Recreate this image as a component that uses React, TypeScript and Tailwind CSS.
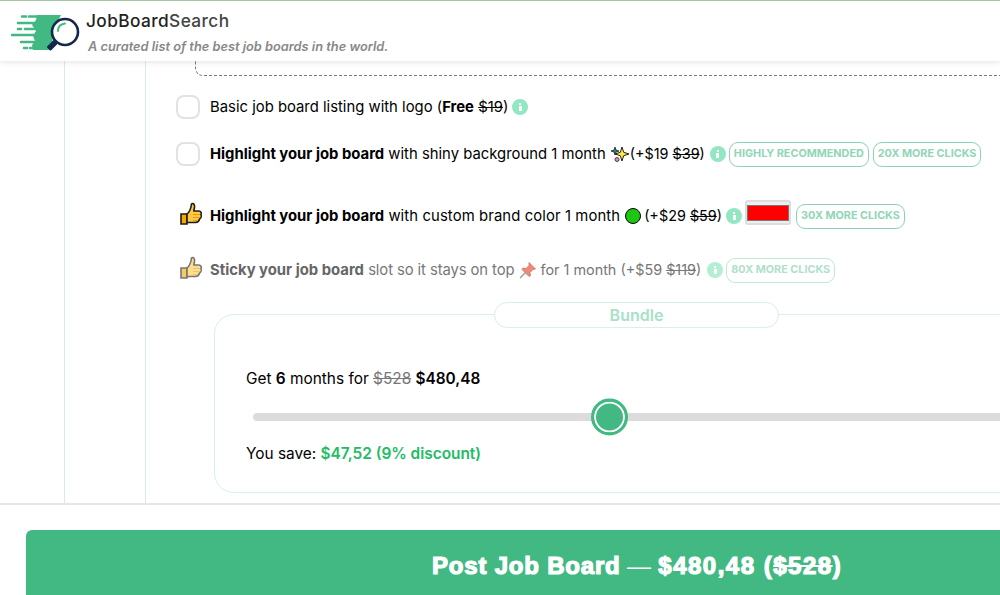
const SANS = 'font-["Inter","Liberation_Sans",sans-serif]';

function Logo() {
  return (
    <svg width="70" height="38" viewBox="0 0 70 38" className="shrink-0">
      <path d="M26 1h24l-8 16-1 19H22l-1-5 3-4-2-5 3-5-4-6 4-5z" fill="#42b883" />
      <g stroke="#42b883" strokeWidth="2.6" strokeLinecap="round">
        <path d="M11 2.500h4M18 2.500h8M7 9h20M7 15h3M14 15h10M1 21h26M10 28h16M13 34h3M19 34h6" />
      </g>
      <circle cx="54" cy="18" r="13" fill="#fff" stroke="#14284b" strokeWidth="2.600" />
      <path d="M47 17c0-4.500 3-7 7-7.500" fill="none" stroke="#42b883" strokeWidth="1.800" strokeLinecap="round" />
      <path d="M43 27l-6 6 2.500 2.500 6-6z" fill="#14284b" stroke="#14284b" strokeWidth="2" strokeLinejoin="round" />
    </svg>
  );
}

function Thumb({ faded = false }: { faded?: boolean }) {
  return (
    <svg width="23" height="23" viewBox="0 0 23 23" className={`shrink-0 ${faded ? 'opacity-60' : ''}`}>
      <path d="M1 12h6v10H1z" fill="#f5a800" stroke="#1c1c1c" strokeWidth="1.600" />
      <path d="M7 12c2.500-2 4-5.500 4.500-10 2-1.500 3.500 1 3 3.500l-.7 3.500h5c2 0 3 2 2.200 3.500.7 2-.2 4-1.400 4.500-.5 1.800-1.600 3.500-4 3.500H7z" fill="#ffc83d" stroke="#1c1c1c" strokeWidth="1.600" strokeLinejoin="round" />
      <path d="M13 12.500h7M13 15.500h7M13 18.500h5" stroke="#e39a1e" strokeWidth="1.200" />
    </svg>
  );
}

function Sparkle() {
  return (
    <svg width="18" height="18" viewBox="0 0 18 18" className="shrink-0">
      <path d="M4 2l1 3 3 1-3 1-1 3-1-3-3-1 3-1z" fill="#1a7f8e" stroke="#222" strokeWidth=".8" />
      <path d="M11 2l1.700 5.300L18 9l-5.300 1.700L11 16l-1.700-5.300L4 9l5.300-1.700z" fill="#ffe93b" stroke="#222" strokeWidth="1" strokeLinejoin="round" />
      <circle cx="6" cy="14.500" r="2" fill="#e88fb0" stroke="#222" strokeWidth=".8" />
    </svg>
  );
}

function Pin() {
  return (
    <svg width="18" height="18" viewBox="0 0 18 18" className="shrink-0 opacity-70">
      <path d="M10 1.500l6.500 6.500-2.500.5-3 3 .5 3-1.500 1L3 8.500l1-1.500 3 .5 3-3z" fill="#e8593c" stroke="#a8402c" strokeWidth=".8" strokeLinejoin="round" />
      <path d="M6 12l-4.500 4.500" stroke="#777" strokeWidth="1.500" strokeLinecap="round" />
    </svg>
  );
}

function Info({ faded = false }: { faded?: boolean }) {
  return (
    <span className={`flex h-4 w-4 shrink-0 flex-col items-center justify-center gap-[1px] rounded-full ${faded ? 'bg-[#b4efd5]' : 'bg-[#92e6c2]'}`}>
      <span className="h-[2px] w-[2px] bg-white" />
      <span className="h-[5px] w-[3px] bg-white" />
    </span>
  );
}

function Tag({ children, faded = false }: { children: string; faded?: boolean }) {
  return (
    <span className={`inline-flex h-[25px] shrink-0 items-center rounded-[9px] border px-[4px] text-[10.800px] font-bold whitespace-nowrap ${faded ? 'border-[#bfe8d6] text-[#b0e0ca]' : 'border-[#8bd3b2] text-[#8fd6b6]'}`}>
      {children}
    </span>
  );
}

function CheckBox() {
  return <span className="h-6 w-6 shrink-0 rounded-lg border-2 border-[#e2e2e2] bg-white" />;
}

function App() {
  return (
    <div className={`flex h-[595px] w-[1000px] flex-col overflow-hidden bg-white text-[14.850px] text-black ${SANS}`}>
      <header className="relative z-10 flex h-[61px] shrink-0 items-start border-t border-[#a8c5a8] bg-white pt-[13px] pl-[11px] shadow-[0_1px_6px_rgba(0,0,0,0.12)]">
        <Logo />
        <div className="-mt-[2px] ml-[5px]">
          <div className="text-[17.300px] leading-[18px] font-medium tracking-[0.4px] text-[#222]">
            JobBoard<span className="text-[#444]">Search</span>
          </div>
          <div className="mt-[10px] ml-[2px] text-[12.800px] leading-[14px] font-semibold text-[#888] italic">A curated list of the best job boards in the world.</div>
        </div>
      </header>

      <main className="flex min-h-0 flex-1 overflow-hidden pl-[64px]">
        <div className="w-[81px] shrink-0 border-l border-[#d5eee4]" />
        <div className="min-w-0 flex-1 border-l border-[#d5eee4] pl-[30px]">
          <div className="-mt-[17px] ml-[19px] h-[32px] w-[900px] rounded-bl-lg border-b border-l border-dashed border-[#777]" />

          <div className="mt-[19px] flex h-6 items-center">
            <CheckBox />
            <span className="ml-[10px] whitespace-nowrap">Basic job board listing with logo (<b className="font-bold">Free</b> <s>$19</s>)</span>
            <span className="ml-[4px]"><Info /></span>
          </div>

          <div className="mt-[23px] flex h-6 items-center whitespace-nowrap">
            <CheckBox />
            <span className="ml-[10px]"><b className="font-bold">Highlight your job board</b> with shiny background 1 month</span>
            <span className="ml-[5px]"><Sparkle /></span>
            <span className="ml-[1px] text-[14.400px]">(+$19 <s>$39</s>)</span>
            <span className="ml-[5px]"><Info /></span>
            <span className="ml-[3px] flex gap-[4px]"><Tag>HIGHLY RECOMMENDED</Tag><Tag>20X MORE CLICKS</Tag></span>
          </div>

          <div className="mt-[38px] flex h-6 items-center whitespace-nowrap">
            <span className="mb-[5px] ml-[4px]"><Thumb /></span>
            <span className="ml-[7px]"><b className="font-bold">Highlight your job board</b> <span className="tracking-[0.1px]">with custom brand color 1 month</span></span>
            <span className="mr-[3px] ml-[5px] h-[16px] w-[16px] shrink-0 rounded-full border border-black bg-[#1cc714]" />
            <span className="text-[14.400px]">(+$29 <s>$59</s>)</span>
            <span className="ml-[4px]"><Info /></span>
            <span className="mr-[5px] mb-[7px] ml-[3px] flex h-[25px] w-[46px] shrink-0 items-center justify-center rounded-[3px] border-2 border-[#ddd] bg-[#efefef]">
              <span className="h-[16px] w-[42px] border border-[#777] bg-[#f00]" />
            </span>
            <Tag>30X MORE CLICKS</Tag>
          </div>

          <div className="mt-[30px] flex h-6 items-center whitespace-nowrap text-[#777]">
            <span className="mb-[5px] ml-[4px]"><Thumb faded /></span>
            <span className="ml-[7px]"><b className="font-bold text-[#666]">Sticky your job board</b> <span className="tracking-[-0.1px]">slot so it stays on top</span></span>
            <span className="mr-[4px] ml-[4px]"><Pin /></span>
            <span className="text-[14.400px]">for 1 month (+$59 <s>$119</s>)</span>
            <span className="ml-[6px]"><Info faded /></span>
            <span className="ml-[3px]"><Tag faded>80X MORE CLICKS</Tag></span>
          </div>

          <div className="relative mt-[32px] ml-[38px] h-[179px] w-[900px] rounded-[20px] border border-[#d8f0e6] pt-[52px] pl-[31px] text-[15.400px]">
            <div className="absolute -top-[13px] left-[279px] flex h-[26px] w-[285px] items-center justify-center rounded-[13px] border border-[#d8f0e6] bg-white text-[16px] font-semibold text-[#a8e0c8]">Bundle</div>
            <div className="whitespace-nowrap">Get <b className="font-semibold">6</b> months for <s className="text-[#777]">$528</s> <b className="font-semibold">$480,48</b></div>
            <div className="mt-[8px] flex h-[38px] w-[800px] items-center pl-[7px]">
              <div className="relative h-2 w-full rounded-full bg-[#dcdcdc]">
                <span className="absolute top-1/2 left-[338px] h-[37px] w-[37px] -translate-y-1/2 rounded-full border-[3px] border-[#42b883] bg-[#42b883] shadow-[inset_0_0_0_2px_#fff]" />
              </div>
            </div>
            <div className="mt-[6px] whitespace-nowrap">You save: <span className="font-semibold text-[#22bb66]">$47,52 (9% discount)</span></div>
          </div>
        </div>
      </main>

      <footer className="h-[92px] shrink-0 border-t-2 border-[#e6e6e6] bg-white pt-[25px] pl-[26px]">
        <button className="block h-[72px] w-[1100px] rounded-tl-md bg-[#42b883] pl-[406px] text-left font-['Liberation_Sans',sans-serif] text-[24px] leading-[28px] font-bold tracking-[0.800px] whitespace-pre text-white [-webkit-text-stroke:1.200px_white]">
          <span className="block">Post Job Board <span className="-mx-[1px] font-normal [-webkit-text-stroke:0px_white]">—</span> <span className="tracking-[1.500px]">$480,48 (<s>$528</s>)</span></span>
        </button>
      </footer>
    </div>
  );
}

export default App;
